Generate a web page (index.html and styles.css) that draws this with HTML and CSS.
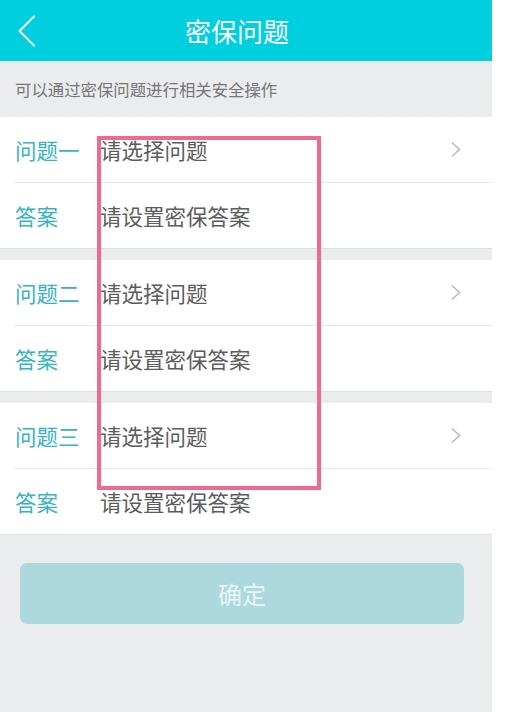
FILE: index.html
```html
<!DOCTYPE html>
<html lang="zh-CN">
<head>
<meta charset="utf-8">
<title>密保问题</title>
<link rel="stylesheet" href="styles.css">
</head>
<body>
<div class="app">
  <header class="topbar">
    <div class="back">
      <svg width="20" height="32" viewBox="0 0 20 32"><polyline points="17,1.5 2.5,16 17,30.5" fill="none" stroke="#fff" stroke-width="2" stroke-linecap="round" stroke-linejoin="round"/></svg>
    </div>
    <h1 class="title">密保问题</h1>
    <div class="spacer"></div>
  </header>
  <p class="hint">可以通过密保问题进行相关安全操作</p>

  <section class="group">
    <div class="row row-q"><span class="label">问题一</span><span class="value">请选择问题</span><span class="arrow"><svg width="12" height="17" viewBox="0 0 12 17"><polyline points="2,1.5 9.5,8.5 2,15.5" fill="none" stroke="#bcbcbc" stroke-width="1.6"/></svg></span></div>
    <div class="row row-a"><span class="label">答案</span><span class="value">请设置密保答案</span></div>
  </section>
  <section class="group">
    <div class="row row-q"><span class="label">问题二</span><span class="value">请选择问题</span><span class="arrow"><svg width="12" height="17" viewBox="0 0 12 17"><polyline points="2,1.5 9.5,8.5 2,15.5" fill="none" stroke="#bcbcbc" stroke-width="1.6"/></svg></span></div>
    <div class="row row-a"><span class="label">答案</span><span class="value">请设置密保答案</span></div>
  </section>
  <section class="group">
    <div class="row row-q"><span class="label">问题三</span><span class="value">请选择问题</span><span class="arrow"><svg width="12" height="17" viewBox="0 0 12 17"><polyline points="2,1.5 9.5,8.5 2,15.5" fill="none" stroke="#bcbcbc" stroke-width="1.6"/></svg></span></div>
    <div class="row row-a"><span class="label">答案</span><span class="value">请设置密保答案</span></div>
  </section>

  <div class="actions"><button class="confirm" type="button">确定</button></div>

  <div class="highlight"></div>
</div>
</body>
</html>
```

FILE: styles.css
```css
* { box-sizing: border-box; }
html, body { margin: 0; padding: 0; background: #ffffff; }
body {
  font-family: "Noto Sans CJK SC", "Noto Sans", sans-serif;
}
.app {
  position: relative;
  width: 492px;
  min-height: 712px;
  background: #ebecee;
}
.topbar {
  height: 61px;
  background: #00cfdf;
  display: grid;
  grid-template-columns: 52px 1fr 70px;
  align-items: center;
}
.back {
  display: flex;
  align-items: center;
  padding-left: 17px;
  height: 61px;
}
.back svg { display: block; }
.title {
  margin: 0;
  text-align: center;
  color: #ffffff;
  font-size: 26px;
  font-weight: 400;
  line-height: 61px;
}
.hint {
  margin: 0;
  height: 56px;
  line-height: 56px;
  padding-left: 15px;
  font-size: 16.4px;
  color: #767676;
}
.group {
  background: #ffffff;
  border-bottom: 1px solid #dedfe1;
  margin-bottom: 11px;
}
.row {
  height: 66px;
  display: flex;
  align-items: center;
  padding-left: 15px;
  font-size: 21.5px;
}
.row-a {
  height: 65px;
}
.row-q {
  border-bottom: 1px solid #e8e8e8;
  margin-left: 14px;
  padding-left: 1px;
}
.label {
  width: 85px;
  color: #38b3c2;
}
.value {
  flex: 1;
  color: #5c5c5c;
}
.arrow {
  width: 12px;
  margin-right: 30px;
  display: flex;
  align-items: center;
}
.arrow svg { display: block; }
.actions {
  padding: 17px 28px 0 20px;
}
.confirm {
  display: block;
  width: 100%;
  height: 61px;
  border: none;
  border-radius: 7px;
  background: #acd8de;
  color: #eaf6f7;
  font-family: "Noto Sans CJK SC", "Noto Sans", sans-serif;
  font-size: 24px;
  padding: 0;
}
.highlight {
  position: absolute;
  left: 97px;
  top: 136px;
  width: 224px;
  height: 354px;
  border: 4px solid #f0698f;
  pointer-events: none;
}
```
